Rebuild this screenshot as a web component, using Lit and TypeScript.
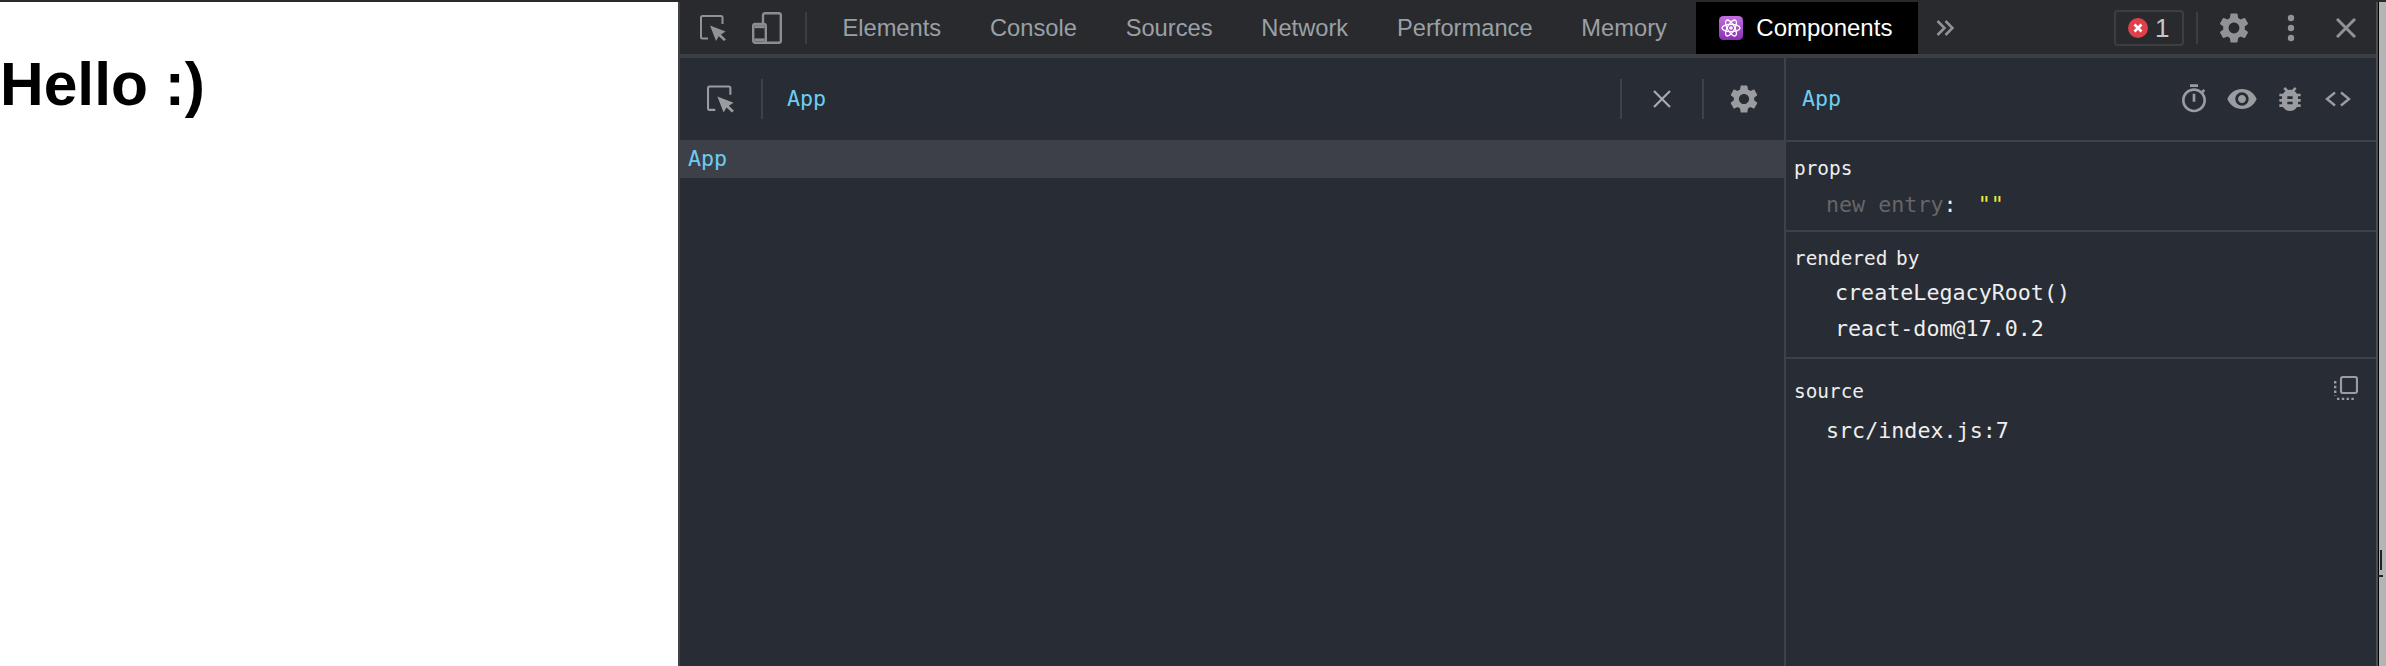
import { LitElement, html, css } from "lit";
import { customElement } from "lit/decorators.js";

const GEAR = "M19.14 12.94c.04-.3.06-.61.06-.94 0-.32-.02-.64-.07-.94l2.03-1.58c.18-.14.23-.41.12-.61l-1.92-3.32c-.12-.22-.37-.29-.59-.22l-2.39.96c-.5-.38-1.03-.7-1.62-.94l-.36-2.54c-.04-.24-.24-.41-.48-.41h-3.84c-.24 0-.43.17-.47.41l-.36 2.54c-.59.24-1.13.57-1.62.94l-2.39-.96c-.22-.08-.47 0-.59.22L2.74 8.87c-.12.21-.08.47.12.61l2.03 1.58c-.05.3-.09.63-.09.94s.02.64.07.94l-2.03 1.58c-.18.14-.23.41-.12.61l1.92 3.32c.12.22.37.29.59.22l2.39-.96c.5.38 1.03.7 1.62.94l.36 2.54c.05.24.24.41.48.41h3.84c.24 0 .44-.17.47-.41l.36-2.54c.59-.24 1.13-.56 1.62-.94l2.39.96c.22.08.47 0 .59-.22l1.92-3.32c.12-.22.07-.47-.12-.61l-2.01-1.58zM12 15.6c-1.98 0-3.6-1.62-3.6-3.6s1.62-3.6 3.6-3.6 3.6 1.62 3.6 3.6-1.62 3.6-3.6 3.6z";
const EYE = "M12 4.5C7 4.5 2.73 7.61 1 12c1.73 4.39 6 7.5 11 7.5s9.27-3.11 11-7.5c-1.73-4.39-6-7.5-11-7.5zM12 17c-2.76 0-5-2.24-5-5s2.24-5 5-5 5 2.24 5 5-2.24 5-5 5zm0-8c-1.66 0-3 1.34-3 3s1.34 3 3 3 3-1.34 3-3-1.34-3-3-3z";
const BUG = "M20 8h-2.81c-.45-.78-1.07-1.45-1.82-1.96L17 4.41 15.59 3l-2.17 2.17C12.96 5.06 12.49 5 12 5c-.49 0-.96.06-1.41.17L8.41 3 7 4.41l1.62 1.63C7.88 6.55 7.26 7.22 6.81 8H4v2h2.09c-.05.33-.09.66-.09 1v1H4v2h2v1c0 .34.04.67.09 1H4v2h2.81c1.04 1.79 2.97 3 5.19 3s4.15-1.21 5.19-3H20v-2h-2.09c.05-.33.09-.66.09-1v-1h2v-2h-2v-1c0-.34-.04-.67-.09-1H20V8zm-6 8h-4v-2h4v2zm0-4h-4v-2h4v2z";
const TIMER = "M15 1H9v2h6V1zm-4 13h2V8h-2v6zm8.03-6.61l1.42-1.42c-.43-.51-.9-.99-1.41-1.41l-1.42 1.42C16.07 4.74 14.12 4 12 4c-4.97 0-9 4.03-9 9s4.02 9 9 9 9-4.03 9-9c0-2.12-.74-4.07-1.97-5.61zM12 20c-3.87 0-7-3.13-7-7s3.13-7 7-7 7 3.13 7 7-3.13 7-7 7z";

const inspect = (cls: string) => html`<svg class=${cls} viewBox="0 0 26 26" fill="none">
  <path d="M8 23.5H2.5a1.5 1.5 0 0 1-1.5-1.5V2.5A1.5 1.5 0 0 1 2.5 1H21a1.5 1.5 0 0 1 1.5 1.5V9" stroke="currentColor" stroke-width="2"/>
  <path d="M10 10.5L25.6 16.6 21 19.6 26 24.4 24 26 18.8 21.2 16 26z" fill="currentColor"/>
</svg>`;

const material = (d: string, cls: string) => html`<svg class=${cls} viewBox="0 0 24 24" fill="currentColor"><path d=${d}/></svg>`;

@customElement("app-root")
export class AppRoot extends LitElement {
  static styles = css`
    :host { display: flex; flex-direction: column; width: 2386px; height: 666px; overflow: hidden; position: relative; background: #b4b4b4; font-family: "Liberation Sans", Arial, sans-serif; }
    .topline { height: 2px; background: #2a2a2a; flex: none; }
    .main { flex: 1; display: flex; min-height: 0; }
    .page { width: 678px; flex: none; background: #fff; color: #000; }
    h1 { margin: 46px 0 0 0; font-size: 60.5px; line-height: 72px; font-weight: 700; }
    .dt { width: 1696px; flex: none; display: flex; flex-direction: column; border-left: 2px solid #3f4145; border-right: 2px solid #4a4d52; }
    .edge { flex: 1; border-left: 1px solid #000; background: #b4b4b4; }
    .tabs { height: 52px; flex: none; display: flex; align-items: center; background: #292a2d; border-bottom: 4px solid #3c3e42; color: #9aa0a6; }
    .i-inspect { width: 26px; height: 26px; margin-left: 20px; color: #8f9296; flex: none; }
    .i-device { width: 30px; height: 32px; margin-left: 26px; color: #8a8d91; flex: none; }
    .tdiv { width: 2px; height: 32px; background: #3c3e42; margin-left: 23px; margin-right: 11px; flex: none; }
    .tab { padding: 0 24.4px; font-size: 23.7px; line-height: 52px; color: #9aa0a6; white-space: nowrap; }
    .tab.active { display: flex; align-items: center; gap: 13px; height: 52px; background: #000; color: #fff; padding: 0 23px; width: 222px; box-sizing: border-box; margin-left: 5px; font-size: 24px; flex: none; }
    .atom { width: 24px; height: 24px; flex: none; }
    .more { width: 18px; height: 16px; margin-left: 18px; color: #8f9296; flex: none; }
    .spacer { flex: 1; }
    .badge { width: 70px; height: 36px; box-sizing: border-box; border: 2px solid #3c3e42; border-radius: 4px; display: flex; align-items: center; padding-left: 12px; gap: 7px; font-size: 26px; color: #c4c7cb; flex: none; }
    .err { width: 20px; height: 20px; flex: none; }
    .tdiv2 { width: 2px; height: 32px; background: #3c3e42; margin-left: 12px; flex: none; }
    .i-gear { width: 36px; height: 36px; margin-left: 18px; color: #8f9296; flex: none; }
    .dots { width: 8px; height: 28px; margin-left: 35px; color: #8f9296; flex: none; }
    .i-x { width: 20px; height: 20px; margin-left: 41px; margin-right: 20px; color: #8f9296; flex: none; }

    .panels { flex: 1; display: flex; background: #282c34; min-height: 0; }
    .left { width: 1104px; flex: none; display: flex; flex-direction: column; }
    .right { flex: 1; border-left: 2px solid #3d4148; display: flex; flex-direction: column; min-width: 0; }
    .mono { font-family: "DejaVu Sans Mono", "Liberation Mono", monospace; font-size: 21.7px; line-height: 36px; white-space: pre; }
    .cbar { height: 82px; flex: none; display: flex; align-items: center; }
    .cbar .i-i2 { width: 27px; height: 28px; margin-left: 27px; color: #9a9ca0; flex: none; }
    .vdiv { width: 2px; height: 40px; background: #3d4148; flex: none; }
    .vdiv.a { margin-left: 27px; }
    .name { color: #6ccdf0; }
    .cbar .name { margin-left: 24px; }
    .vdiv.b { margin-right: 31px; }
    .i-x2 { width: 18px; height: 18px; color: #a8aaae; flex: none; }
    .vdiv.c { margin-left: 31px; }
    .i-g2 { width: 34px; height: 34px; margin-left: 23px; color: #9a9ca0; flex: none; margin-right: 23px; }
    .row { height: 38px; flex: none; background: #3d4048; display: flex; align-items: center; padding-left: 8px; }

    .rhead { height: 82px; flex: none; display: flex; align-items: center; padding-left: 16px; border-bottom: 2px solid #3d4148; color: #9a9ca0; }
    .rhead .name { flex: 1; }
    .ri { flex: none; }
    .ri-timer { width: 32px; height: 32px; margin-right: 16px; }
    .ri-eye { width: 32px; height: 32px; margin-right: 16px; }
    .ri-bug { width: 32px; height: 32px; margin-right: 19px; }
    .ri-code { width: 26px; height: 16px; margin-right: 25px; }
    .sec { padding: 9px 0 10px 8px; border-bottom: 2px solid #3d4148; color: #eee; }
    .sec.last { border-bottom: none; padding-top: 15px; }
    .sec.first { padding-top: 9px; padding-bottom: 7px; }
    .sh { font-family: "DejaVu Sans Mono", "Liberation Mono", monospace; font-size: 19.4px; line-height: 36px; word-spacing: -3px; color: #eee; display: flex; justify-content: space-between; align-items: center; }
    .entry { padding-left: 32px; }
    .owner { padding-left: 41px; }
    .owner.top { margin-top: -2px; }
    .dim { color: #666; }
    .str { color: #f0ea3c; margin-left: 8px; }
    .srcline { padding-left: 32px; margin-top: 3px; }
    .copy { width: 24px; height: 24px; margin-right: 18px; color: #9a9ca0; flex: none; margin-top: -8px; }
    .h1 { position: absolute; right: 4px; top: 550px; width: 2px; height: 20px; background: #222; }
    .h2 { position: absolute; right: 3px; top: 575px; width: 5px; height: 2px; background: #222; }
  `;

  render() {
    const tabs = ["Elements", "Console", "Sources", "Network", "Performance", "Memory"];
    return html`
      <div class="topline"></div>
      <div class="main">
        <div class="page"><h1>Hello :)</h1></div>
        <div class="dt">
          <div class="tabs">
            ${inspect("i-inspect")}
            <svg class="i-device" viewBox="0 0 30 32" fill="none">
              <rect x="11" y="1.2" width="17.8" height="29.6" rx="2" stroke="currentColor" stroke-width="2.4"/>
              <rect x="1.2" y="12" width="12.6" height="18.8" rx="2" fill="#292a2d" stroke="currentColor" stroke-width="2.4"/>
              <rect x="2.4" y="13.2" width="10.2" height="3" fill="currentColor"/>
              <rect x="2.4" y="26.4" width="10.2" height="3" fill="currentColor"/>
            </svg>
            <div class="tdiv"></div>
            ${tabs.map((t) => html`<div class="tab">${t}</div>`)}
            <div class="tab active">
              <svg class="atom" viewBox="0 0 24 24">
                <defs><linearGradient id="ag" x1="0" y1="0" x2="0" y2="1"><stop offset="0" stop-color="#c36fe0"/><stop offset="1" stop-color="#8a2fb5"/></linearGradient></defs>
                <rect width="24" height="24" rx="4.5" fill="url(#ag)"/>
                <g fill="none" stroke="#fff" stroke-width="1.3">
                  <ellipse cx="12" cy="12" rx="9" ry="3.6"/>
                  <ellipse cx="12" cy="12" rx="9" ry="3.6" transform="rotate(60 12 12)"/>
                  <ellipse cx="12" cy="12" rx="9" ry="3.6" transform="rotate(120 12 12)"/>
                </g>
                <circle cx="12" cy="12" r="1.8" fill="#fff"/>
              </svg>
              Components
            </div>
            <svg class="more" viewBox="0 0 18 16" fill="none" stroke="currentColor" stroke-width="2.6">
              <path d="M1.5 1L8.5 8 1.5 15M9.5 1L16.5 8 9.5 15"/>
            </svg>
            <div class="spacer"></div>
            <div class="badge">
              <svg class="err" viewBox="0 0 20 20">
                <circle cx="10" cy="10" r="10" fill="#e0404a"/>
                <path d="M6.5 6.5L13.5 13.5M13.5 6.5L6.5 13.5" stroke="#fff" stroke-width="2.6"/>
              </svg>
              1
            </div>
            <div class="tdiv2"></div>
            ${material(GEAR, "i-gear")}
            <svg class="dots" viewBox="0 0 8 28" fill="currentColor">
              <circle cx="4" cy="4" r="3.2"/><circle cx="4" cy="14" r="3.2"/><circle cx="4" cy="24" r="3.2"/>
            </svg>
            <svg class="i-x" viewBox="0 0 20 20" stroke="currentColor" stroke-width="3" fill="none">
              <path d="M1 1L19 19M19 1L1 19"/>
            </svg>
          </div>
          <div class="panels">
            <div class="left">
              <div class="cbar">
                ${inspect("i-i2")}
                <div class="vdiv a"></div>
                <div class="mono name">App</div>
                <div class="spacer"></div>
                <div class="vdiv b"></div>
                <svg class="i-x2" viewBox="0 0 18 18" stroke="currentColor" stroke-width="2.2" fill="none">
                  <path d="M1 1L17 17M17 1L1 17"/>
                </svg>
                <div class="vdiv c"></div>
                ${material(GEAR, "i-g2")}
              </div>
              <div class="row"><span class="mono name">App</span></div>
            </div>
            <div class="right">
              <div class="rhead">
                <div class="mono name">App</div>
                ${material(TIMER, "ri ri-timer")}
                ${material(EYE, "ri ri-eye")}
                ${material(BUG, "ri ri-bug")}
                <svg class="ri ri-code" viewBox="0 0 26 16" fill="none" stroke="currentColor" stroke-width="2.4">
                  <path d="M10 1.5L2 8 10 14.5M16 1.5L24 8 16 14.5"/>
                </svg>
              </div>
              <div class="sec first">
                <div class="sh">props</div>
                <div class="mono entry"><span class="dim">new entry</span>: <span class="str">""</span></div>
              </div>
              <div class="sec">
                <div class="sh">rendered by</div>
                <div class="mono owner top">createLegacyRoot()</div>
                <div class="mono owner">react-dom@17.0.2</div>
              </div>
              <div class="sec last">
                <div class="sh"><span>source</span><svg class="copy" viewBox="0 0 24 24" fill="none" stroke="currentColor">
                    <rect x="7" y="1" width="16" height="16" rx="2" stroke-width="2.2"/>
                    <path d="M1.2 5V20M3 23H21" stroke-width="2.4" stroke-dasharray="2.4 2.4"/>
                  </svg></div>
                <div class="mono srcline">src/index.js:7</div>
              </div>
            </div>
          </div>
        </div>
        <div class="edge"></div>
      </div>
      <div class="h1"></div>
      <div class="h2"></div>
    `;
  }
}
